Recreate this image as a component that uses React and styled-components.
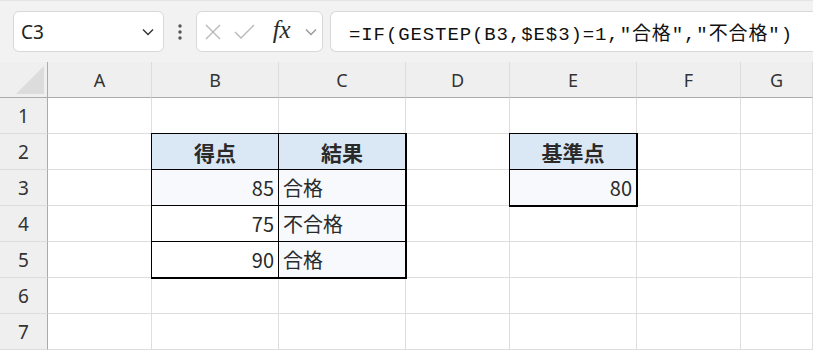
import React from 'react';
import styled, { createGlobalStyle } from 'styled-components';

const Global = createGlobalStyle`
  html, body { margin: 0; padding: 0; background: #fff; }
  body { font-family: "Noto Sans", "Noto Sans CJK JP", sans-serif; overflow: hidden; }
`;

const Toolbar = styled.div`
  height: 62px;
  box-sizing: border-box;
  background: #f2f2f2;
  border-top: 1px solid #e4e4e4;
  display: flex;
  align-items: center;
  padding: 0 0 0 13px;
`;

const Box = styled.div`
  height: 41px;
  box-sizing: border-box;
  background: #fff;
  border: 1px solid #d8d8d8;
  border-radius: 6px;
  display: flex;
  align-items: center;
`;

const NameBox = styled(Box)`
  width: 151px;
  padding: 0 8px 0 7px;
  justify-content: space-between;
  font-size: 19px;
  color: #222;
`;

const Dots = styled.div`
  width: 32px;
  display: flex;
  justify-content: center;
`;

const FxBox = styled(Box)`
  width: 127px;
  padding: 0 4px 0 8px;
  justify-content: space-between;
`;

const Fx = styled.span`
  font-family: "Liberation Serif", serif;
  font-style: italic;
  font-size: 25px;
  color: #2a2a2a;
  margin: -4px 0 0 4px;
`;

const FormulaBar = styled(Box)`
  flex: 1;
  margin-left: 7px;
  border-right: none;
  border-radius: 6px 0 0 6px;
  padding-left: 18px;
  font-family: "Liberation Mono", "Noto Sans CJK JP", monospace;
  font-size: 19px;
  letter-spacing: 0.9px;
  color: #111;
  white-space: nowrap;
`;

const Sheet = styled.div`
  display: grid;
  grid-template-columns: 48px 104px 127px 127px 104px 127px 104px 1fr;
  grid-auto-rows: 36px;
`;

const Corner = styled.div`
  background: #efefef;
  border-right: 1px solid #ababab;
  border-bottom: 1px solid #ababab;
  display: flex;
  align-items: flex-end;
  justify-content: flex-end;
  padding: 0 3px 3px 0;
`;

const ColHead = styled.div`
  background: #efefef;
  border-right: 1px solid #dcdcdc;
  border-bottom: 1px solid #ababab;
  display: flex;
  align-items: center;
  justify-content: center;
  font-size: 18px;
  color: #333;
`;

const RowHead = styled.div`
  background: #efefef;
  border-right: 1px solid #ababab;
  border-bottom: 1px solid #dcdcdc;
  display: flex;
  align-items: center;
  justify-content: center;
  font-size: 19px;
  color: #333;
`;

const Cell = styled.div`
  border-right: 1px solid ${p => (p.$boxed ? '#000' : '#dedede')};
  border-bottom: 1px solid ${p => (p.$boxed ? '#000' : '#dedede')};
  background: ${p => (p.$head ? '#dae8f6' : p.$tint ? '#f7f9fc' : '#fff')};
  ${p => p.$boxed && 'box-shadow: 0 0 0 1px #000; position: relative; z-index: 1;'}
  display: flex;
  align-items: center;
  justify-content: ${p => (p.$head ? 'center' : p.$num ? 'flex-end' : 'flex-start')};
  padding: 0 4px;
  font-family: "Noto Sans CJK JP", sans-serif;
  font-size: ${p => (p.$head ? '21px' : '20px')};
  font-weight: ${p => (p.$head ? 700 : 400)};
  color: #2a2a2a;
  overflow: hidden;
  white-space: nowrap;
`;

const cols = ['A', 'B', 'C', 'D', 'E', 'F', 'G'];

const cells = {
  B2: { v: '得点', head: true },
  C2: { v: '結果', head: true },
  E2: { v: '基準点', head: true },
  B3: { v: '85', num: true, tint: true },
  C3: { v: '合格', tint: true },
  E3: { v: '80', num: true, tint: true },
  B4: { v: '75', num: true },
  C4: { v: '不合格', tint: true },
  B5: { v: '90', num: true },
  C5: { v: '合格', tint: true },
};

const Chevron = ({ size = 14, color = '#333' }) => (
  <svg width={size} height={size} viewBox="0 0 14 14">
    <polyline points="2,4.5 7,9.5 12,4.5" fill="none" stroke={color} strokeWidth="1.4" />
  </svg>
);

export default function App() {
  return (
    <>
      <Global />
      <Toolbar>
        <NameBox>
          <span>C3</span>
          <Chevron />
        </NameBox>
        <Dots>
          <svg width="4" height="16" viewBox="0 0 4 16">
            <circle cx="2" cy="2" r="1.7" fill="#555" />
            <circle cx="2" cy="8" r="1.7" fill="#555" />
            <circle cx="2" cy="14" r="1.7" fill="#555" />
          </svg>
        </Dots>
        <FxBox>
          <svg width="16" height="16" viewBox="0 0 16 16">
            <path d="M1 1 L15 15 M15 1 L1 15" stroke="#b8b8b8" strokeWidth="1.4" />
          </svg>
          <svg width="21" height="16" viewBox="0 0 21 16">
            <polyline points="1,8 7,14 20,1" fill="none" stroke="#b8b8b8" strokeWidth="1.4" />
          </svg>
          <Fx>fx</Fx>
          <Chevron size={14} color="#999" />
        </FxBox>
        <FormulaBar>=IF(GESTEP(B3,$E$3)=1,"合格","不合格")</FormulaBar>
      </Toolbar>
      <Sheet>
        <Corner>
          <svg width="28" height="28" viewBox="0 0 28 28">
            <polygon points="28,0 28,28 0,28" fill="#dcdcdc" />
          </svg>
        </Corner>
        {cols.map(c => (
          <ColHead key={c}>{c}</ColHead>
        ))}
        {[1, 2, 3, 4, 5, 6, 7].map(r => (
          <React.Fragment key={r}>
            <RowHead>{r}</RowHead>
            {cols.map(c => {
              const d = cells[c + r];
              return (
                <Cell key={c} $boxed={!!d} $head={d?.head} $tint={d?.tint} $num={d?.num}>
                  {d?.v}
                </Cell>
              );
            })}
          </React.Fragment>
        ))}
      </Sheet>
    </>
  );
}
